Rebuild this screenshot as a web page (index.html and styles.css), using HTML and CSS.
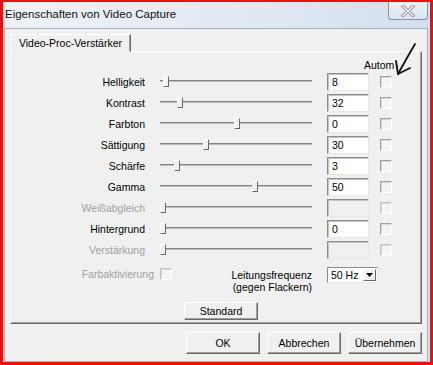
FILE: index.html
```html
<!DOCTYPE html>
<html lang="de">
<head>
    <meta charset="UTF-8">
    <title>Eigenschaften von Video Capture</title>
    <link rel="stylesheet" href="styles.css">
</head>
<body>
<div class="screen">
    <div class="titlebar">
        <span class="title">Eigenschaften von Video Capture</span>
        <div class="close">
            <svg width="16" height="12" viewBox="0 0 16 12">
                <path d="M3 1.5 L13 10.5 M13 1.5 L3 10.5" stroke="#8d97a3" stroke-width="3.2" stroke-linecap="square"/>
                <path d="M3 1.5 L13 10.5 M13 1.5 L3 10.5" stroke="#f4f6f9" stroke-width="1.4" stroke-linecap="square"/>
            </svg>
        </div>
    </div>

    <div class="client">
        <div class="tabs">
            <div class="tab">Video-Proc-Verstärker</div>
        </div>
        <div class="panel">
            <div class="head"><span class="autom">Autom</span></div>

            <div class="row">
                <span class="label">Helligkeit</span>
                <div class="slider"><span class="thumb" style="left: 3px"></span></div>
                <div class="edit">8</div>
                <span class="check"></span>
            </div>
            <div class="row">
                <span class="label">Kontrast</span>
                <div class="slider"><span class="thumb" style="left: 17px"></span></div>
                <div class="edit">32</div>
                <span class="check"></span>
            </div>
            <div class="row">
                <span class="label">Farbton</span>
                <div class="slider"><span class="thumb" style="left: 74px"></span></div>
                <div class="edit">0</div>
                <span class="check"></span>
            </div>
            <div class="row">
                <span class="label">Sättigung</span>
                <div class="slider"><span class="thumb" style="left: 43px"></span></div>
                <div class="edit">30</div>
                <span class="check"></span>
            </div>
            <div class="row">
                <span class="label">Schärfe</span>
                <div class="slider"><span class="thumb" style="left: 14px"></span></div>
                <div class="edit">3</div>
                <span class="check"></span>
            </div>
            <div class="row">
                <span class="label">Gamma</span>
                <div class="slider"><span class="thumb" style="left: 92px"></span></div>
                <div class="edit">50</div>
                <span class="check"></span>
            </div>
            <div class="row disabled">
                <span class="label">Weißabgleich</span>
                <div class="slider"><span class="thumb" style="left: 0px"></span></div>
                <div class="edit"></div>
                <span class="check"></span>
            </div>
            <div class="row">
                <span class="label">Hintergrund</span>
                <div class="slider"><span class="thumb" style="left: 0px"></span></div>
                <div class="edit">0</div>
                <span class="check"></span>
            </div>
            <div class="row disabled">
                <span class="label">Verstärkung</span>
                <div class="slider"><span class="thumb" style="left: 0px"></span></div>
                <div class="edit"></div>
                <span class="check"></span>
            </div>

            <div class="misc">
                <div class="farb">
                    <span>Farbaktivierung</span>
                    <span class="check"></span>
                </div>
                <div class="freq">Leitungsfrequenz<br>(gegen Flackern)</div>
                <div class="combo">
                    <span class="combo-text">50 Hz</span>
                    <span class="combo-btn">
                        <svg width="7" height="4" viewBox="0 0 7 4"><path d="M0 0 H7 L3.5 4 Z" fill="#000"/></svg>
                    </span>
                </div>
            </div>

            <div class="std-row">
                <button class="btn std">Standard</button>
            </div>
        </div>

        <div class="buttons">
            <button class="btn">OK</button>
            <button class="btn">Abbrechen</button>
            <button class="btn">Übernehmen</button>
        </div>
    </div>

    <!-- hand drawn arrow on top of the screenshot -->
    <svg class="arrow" width="30" height="40" viewBox="390 40 30 40">
        <path d="M415 44 Q408 56 398 74" stroke="#111" stroke-width="1.8" fill="none" stroke-linecap="round"/>
        <path d="M396 61 L398 74 L410 68" stroke="#111" stroke-width="1.8" fill="none" stroke-linecap="round" stroke-linejoin="round"/>
    </svg>
</div>
</body>
</html>
```

FILE: styles.css
```css
body {
    margin: 0;
    padding: 0;
    font-family: "Liberation Sans", Arial, sans-serif;
    font-size: 10.5px;
    color: #000;
}
.screen {
    position: relative;
    width: 433px;
    height: 365px;
    box-sizing: border-box;
    border: solid #e8110f;
    border-width: 2px 3px 3px 3px;
    background: linear-gradient(to right, #eef2f7 0%, #e3eaf3 50%, #d3dfee 100%);
    display: flex;
    flex-direction: column;
}
.titlebar {
    height: 26px;
    display: flex;
    align-items: flex-start;
    flex-shrink: 0;
}
.title {
    font-size: 11.5px;
    line-height: 24px;
    margin-left: 2px;
    color: #111;
}
.close {
    margin-left: auto;
    margin-right: 2px;
    width: 40px;
    height: 18px;
    box-sizing: border-box;
    border: 1px solid #8793a3;
    border-top: none;
    border-radius: 0 0 4px 4px;
    background: linear-gradient(#eef2f7, #dbe3ed);
    display: flex;
    align-items: center;
    justify-content: center;
}
.client {
    flex: 1;
    margin: 0 2px 0 1px;
    background-color: #f0f0f0;
    border: 1px solid #a7b1be;
    padding: 5px 5px 0 5px;
}

/* tab */
.tabs {
    display: flex;
    height: 18px;
    margin-bottom: -1px;
    position: relative;
    z-index: 1;
}
.tab {
    width: 121px;
    box-sizing: border-box;
    border: 1px solid;
    border-color: #fff #696969 transparent #fff;
    box-shadow: inset -1px 0 0 #a0a0a0;
    background-color: #f0f0f0;
    line-height: 16px;
    text-align: center;
}
.panel {
    height: 273px;
    box-sizing: border-box;
    border: 1px solid;
    border-color: #fff #696969 #696969 #fff;
    box-shadow: inset -1px -1px 0 #a0a0a0;
    padding-top: 7px;
}
.head {
    height: 12px;
    line-height: 12px;
    padding-left: 353px;
}

/* slider rows */
.row {
    display: flex;
    align-items: center;
    height: 21px;
}
.label {
    width: 134px;
    text-align: right;
    margin-right: 15px;
}
.slider {
    position: relative;
    width: 152px;
    height: 21px;
    margin-right: 15px;
}
.slider::before {
    content: "";
    position: absolute;
    left: 0;
    right: 0;
    top: 9px;
    height: 1px;
    background-color: #848484;
    border-bottom: 1px solid #bdbdbd;
}
.thumb {
    position: absolute;
    top: 5px;
    width: 4px;
    height: 9px;
    border: 1px solid;
    border-color: #fff #696969 #696969 #fff;
    background-color: #f0f0f0;
}
.edit {
    width: 42px;
    height: 18px;
    box-sizing: border-box;
    border: 1px solid;
    border-color: #8c8c8c #e6e6e6 #e6e6e6 #8c8c8c;
    box-shadow: inset 1px 1px 0 #c4c4c4;
    background-color: #fff;
    padding-left: 4px;
    line-height: 16px;
    margin-right: 11px;
}
.check {
    width: 12px;
    height: 12px;
    box-sizing: border-box;
    border: 1px solid;
    border-color: #a0a0a0 #fff #fff #a0a0a0;
    box-shadow: inset 1px 1px 0 #d8d8d8;
    background-color: #f4f4f4;
}
.disabled .label {
    color: #a0a0a0;
}
.disabled .edit {
    background-color: #f0f0f0;
}
.disabled .check {
    border-color: #c4c4c4 #fff #fff #c4c4c4;
}

/* misc row */
.misc {
    display: flex;
    align-items: flex-start;
    margin-top: 7px;
    height: 26px;
}
.farb {
    width: 161px;
    display: flex;
    justify-content: flex-end;
    align-items: center;
    gap: 6px;
    color: #a0a0a0;
    margin-top: 1px;
}
.farb .check {
    border-color: #c4c4c4 #fff #fff #c4c4c4;
}
.freq {
    width: 140px;
    text-align: right;
    line-height: 12px;
    padding-top: 2px;
    margin-right: 15px;
}
.combo {
    width: 51px;
    height: 16px;
    box-sizing: border-box;
    border: 1px solid;
    border-color: #8c8c8c #e6e6e6 #e6e6e6 #8c8c8c;
    background-color: #fff;
    display: flex;
    align-items: center;
}
.combo-text {
    flex: 1;
    padding-left: 3px;
}
.combo-btn {
    width: 13px;
    height: 12px;
    margin-right: 1px;
    box-sizing: border-box;
    border: 1px solid;
    border-color: #fff #696969 #696969 #fff;
    background-color: #f0f0f0;
    display: flex;
    align-items: center;
    justify-content: center;
}

/* buttons */
.btn {
    font-family: "Liberation Sans", Arial, sans-serif;
    font-size: 10.5px;
    color: #000;
    width: 74px;
    height: 22px;
    box-sizing: border-box;
    border: 1px solid;
    border-color: #fff #696969 #696969 #fff;
    box-shadow: inset -1px -1px 0 #a0a0a0;
    background-color: #f0f0f0;
    padding: 0;
}
.std-row {
    margin-top: 9px;
    padding-left: 173px;
}
.std {
    height: 18px;
}
.buttons {
    display: flex;
    justify-content: flex-end;
    gap: 7px;
    margin-top: 8px;
}
.arrow {
    position: absolute;
    left: 387px;
    top: 38px;
}
```
